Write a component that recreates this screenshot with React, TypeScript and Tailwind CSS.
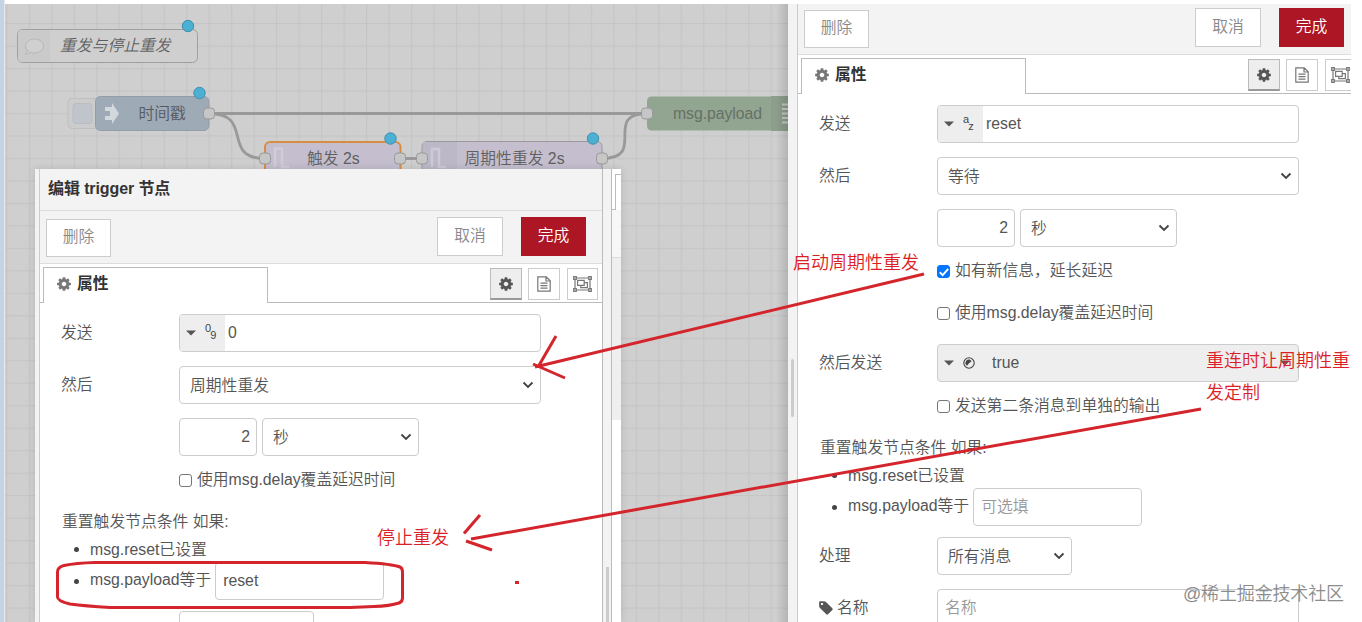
import React from "react";

const FONT = "font-['Liberation_Sans','Noto_Sans_CJK_SC',sans-serif]";

function Gear({ className = "" }: { className?: string }) {
  return (
    <svg viewBox="0 0 1792 1792" className={className} fill="currentColor">
      <path d="M1152 896q0-106-75-181t-181-75-181 75-75 181 75 181 181 75 181-75 75-181zm512-109v222q0 12-8 23t-20 13l-185 28q-19 54-39 91 35 50 107 138 10 12 10 25t-9 23q-27 37-99 108t-94 71q-12 0-26-9l-138-108q-44 23-91 38-16 136-29 186-7 28-36 28h-222q-14 0-24.5-8.5t-11.5-21.5l-28-184q-49-16-90-37l-141 107q-10 9-25 9-14 0-25-11-126-114-165-168-7-10-7-23 0-12 8-23 15-21 51-66.5t54-70.5q-27-50-41-99l-183-27q-13-2-21-12.5t-8-23.5v-222q0-12 8-23t19-13l186-28q14-46 39-92-40-57-107-138-10-12-10-24 0-10 9-23 26-36 98.5-107.5t94.5-71.5q13 0 26 10l138 107q44-23 91-38 16-136 29-186 7-28 36-28h222q14 0 24.5 8.5t11.5 21.5l28 184q49 16 90 37l142-107q9-9 24-9 13 0 25 10 129 119 165 170 7 8 7 22 0 12-8 23-15 21-51 66.5t-54 70.5q26 50 41 98l183 28q13 2 21 12.5t8 23.5z" />
    </svg>
  );
}

function Tag() {
  return (
    <svg viewBox="0 0 1792 1792" className="-ml-px h-4 w-4" fill="currentColor">
      <path d="M576 448q0-53-37.5-90.5t-90.5-37.5-90.5 37.5-37.5 90.5 37.5 90.5 90.5 37.5 90.5-37.5 37.5-90.5zm1067 576q0 53-37 90l-491 492q-39 37-91 37-53 0-90-37l-715-716q-38-37-64.5-101t-26.5-117v-416q0-52 38-90t90-38h416q53 0 117 26.5t102 64.5l715 714q37 39 37 91z" />
    </svg>
  );
}

function DocIcon() {
  return (
    <svg viewBox="0 0 14 16" className="h-4 w-3.5" fill="none" stroke="#777" strokeWidth="1.2">
      <path d="M.8.8h8.4l4 4v10.4H.8zM9 .8V5h4.2M3.5 7.2h7M3.5 9.7h7M3.5 12.2h7" />
    </svg>
  );
}

function GroupIcon() {
  return (
    <svg viewBox="0 0 19 16" className="h-4 w-[19px] shrink-0" fill="none" stroke="#777" strokeWidth="1.2">
      <path d="M3 2h13M3 14h13M2 3v10M17 3v10" />
      <path d="M.7.7h2.6v2.6H.7zM15.7.7h2.6v2.6h-2.6zM.7 12.7h2.6v2.6H.7zM15.7 12.7h2.6v2.6h-2.6z" fill="#ddd" />
      <path d="M4.6 4.4h6.6v5H4.6zM11.2 6.6h3.2v5H7.8V9.4" />
    </svg>
  );
}

function Chevron() {
  return (
    <svg viewBox="0 0 12 8" className="h-2 w-3" fill="none" stroke="#444" strokeWidth="1.9">
      <path d="M1.500 1.500L6 5.900l4.500-4.400" />
    </svg>
  );
}

function Caret() {
  return (
    <svg viewBox="0 0 10 6" className="h-[6px] w-[10px]" fill="#555">
      <path d="M0 .4h10L5 5.6z" />
    </svg>
  );
}

function Select({ text, className }: { text: string; className: string }) {
  return (
    <div className={`flex h-[38px] items-center justify-between rounded border border-[#ccc] bg-white pl-[10px] pr-[6px] ${className}`}>
      <span className="pt-[2px]">{text}</span>
      <Chevron />
    </div>
  );
}

function TypedInput({ top, bottom, text }: { top: string; bottom: string; text: string }) {
  return (
    <div className="flex h-[38px] w-[362px] overflow-hidden rounded border border-[#ccc] bg-white">
      <div className="flex w-[45px] items-center bg-[#eee] pl-[6px]">
        <Caret />
        <div className="ml-[9px] flex h-[22px] text-[11px] leading-[11px] text-[#444]">
          <span className="pt-px">{top}</span>
          <span className="-ml-px pt-[8px]">{bottom}</span>
        </div>
      </div>
      <span className="pl-[3px] leading-[35px]">{text}</span>
    </div>
  );
}

function Check({ label, on = false, className }: { label: string; on?: boolean; className: string }) {
  return (
    <div className={`ml-[117px] flex items-center ${className}`}>
      <span className={`mt-px flex h-[13px] w-[13px] items-center justify-center rounded-[3px] border ${on ? "border-[#0075ff] bg-[#0075ff]" : "border-[#767676] bg-white"}`}>
        {on && (
          <svg viewBox="0 0 12 12" className="h-3 w-3 shrink-0" fill="none" stroke="white" strokeWidth="2">
            <path d="M1.8 6.2l2.9 2.9L10.2 2.8" />
          </svg>
        )}
      </span>
      <span className="ml-[5px] -mt-px">{label}</span>
    </div>
  );
}

function Label({ children }: { children: React.ReactNode }) {
  return <div className="-ml-px mr-px flex h-[38px] w-[117px] shrink-0 items-center">{children}</div>;
}

function Bullet({ children, className }: { children: React.ReactNode; className: string }) {
  return (
    <div className={`flex pl-3 ${className}`}>
      <span className="mr-[11px] flex h-[36px] items-center self-center">
        <span className="h-[5px] w-[5px] rounded-full bg-[#444]" />
      </span>
      {children}
    </div>
  );
}

function Toolbar() {
  return (
    <div className="flex h-[51px] shrink-0 items-start border-b border-[#ddd] bg-[#f3f3f3] pl-[6px] pt-1 leading-[34px] text-[#888]">
      <div className="mt-[2px] h-[38px] w-[65px] border border-[#ccc] bg-white text-center">删除</div>
      <div className="ml-[326px] h-[39px] w-[66px] border border-[#ccc] bg-white text-center leading-[36px]">取消</div>
      <div className="ml-[18px] h-[39px] w-[65px] bg-[#ad1625] text-center leading-[37px] text-white">完成</div>
    </div>
  );
}

function TabBar() {
  return (
    <div className="flex h-[39px] shrink-0 pt-[3px]">
      <div className="w-[3px] shrink-0 border-b border-[#bbb]" />
      <div className="flex w-[225px] shrink-0 items-center border-x border-t border-[#bbb] pb-[4px] pl-[12px] font-bold text-[#333]">
        <Gear className="mr-[5px] h-4 w-4 text-[#777]" />
        属性
      </div>
      <div className="flex flex-1 border-b border-[#bbb] pl-[222px] pt-px">
        <div className="flex h-8 w-8 shrink-0 items-center justify-center border border-b-2 border-[#bbb] border-b-[#999] bg-[#eee] text-[#555]">
          <Gear className="h-4 w-4" />
        </div>
        <div className="ml-[6px] flex h-8 w-8 shrink-0 items-center justify-center border border-[#ccc]">
          <DocIcon />
        </div>
        <div className="ml-[7px] flex h-8 w-[31px] shrink-0 items-center justify-center border border-[#ccc]">
          <GroupIcon />
        </div>
      </div>
    </div>
  );
}

function Delay() {
  return (
    <div className="ml-[117px] flex h-[38px]">
      <div className="h-[38px] w-[78px] rounded border border-[#ccc] bg-white pr-[6px] text-right leading-[36px]">2</div>
      <Select text="秒" className="ml-[5px] w-[157px]" />
    </div>
  );
}

function ResetRules({ value, muted = false }: { value: string; muted?: boolean }) {
  return (
    <>
      <div className="flex h-[34px] items-center pt-[2px]">重置触发节点条件 如果:</div>
      <Bullet className="h-[22px] items-center"><span className="pt-[2px]">msg.reset已设置</span></Bullet>
      <Bullet className="mt-[2px] h-[38px]">
        <span className="leading-[36px]">msg.payload等于</span>
        <span className={`ml-1 h-[38px] w-[169px] rounded border border-[#ccc] bg-white pl-[7px] leading-[35px] ${muted ? "text-[#999]" : ""}`}>{value}</span>
      </Bullet>
    </>
  );
}

function ReferenceForm() {
  return (
    <div className="flex flex-col pl-[22px] pt-[11px]">
      <div className="flex h-[52px]"><Label>发送</Label><TypedInput top="a" bottom="z" text="reset" /></div>
      <div className="flex h-[52px]"><Label>然后</Label><Select text="等待" className="w-[362px]" /></div>
      <Delay />
      <Check on label="如有新信息，延长延迟" className="h-[48px]" />
      <Check label="使用msg.delay覆盖延迟时间" className="h-[36px]" />
      <div className="mt-[13px] flex h-[38px]">
        <Label>然后发送</Label>
        <div className="flex h-[38px] w-[362px] items-center rounded border border-[#ccc] bg-[#eee] pl-[6px]">
          <Caret />
          <svg viewBox="0 0 12 12" className="ml-[9px] h-3 w-3" fill="none" stroke="#444" strokeWidth="1.1">
            <circle cx="6" cy="6" r="5.2" />
            <path d="M6.800 2.600A3.400 3.400 0 0 0 4 8.700L6 6.300 8.600 4.200z" fill="#444" stroke="none" />
          </svg>
          <span className="ml-[17px]">true</span>
          <span className="ml-auto mr-2"><Caret /></span>
        </div>
      </div>
      <Check label="发送第二条消息到单独的输出" className="h-[48px]" />
      <ResetRules value="可选填" muted />
      <div className="mt-[11px] flex h-[52px]"><Label>处理</Label><Select text="所有消息" className="w-[135px]" /></div>
      <div className="flex">
        <Label><Tag /><span className="ml-[3px]">名称</span></Label>
        <div className="h-[38px] w-[362px] rounded border border-[#ccc] pl-[7px] leading-[35px] text-[#999]">名称</div>
      </div>
    </div>
  );
}

function TriggerForm() {
  return (
    <div className="flex flex-col pl-[22px] pt-[11px]">
      <div className="flex h-[52px]"><Label>发送</Label><TypedInput top="0" bottom="9" text="0" /></div>
      <div className="flex h-[52px]"><Label>然后</Label><Select text="周期性重发" className="w-[362px]" /></div>
      <Delay />
      <Check label="使用msg.delay覆盖延迟时间" className="h-[48px]" />
      <ResetRules value="reset" />
      <div className="ml-[117px] mt-[11px] h-[38px] w-[135px] rounded border border-[#ccc]" />
    </div>
  );
}

function Port({ x, y }: { x: number; y: number }) {
  return <rect x={x - 5.5} y={y - 5.5} width="11" height="11" rx="3.5" fill="#c6c6c6" stroke="#999" />;
}

function Dot({ x, y }: { x: number; y: number }) {
  return <circle cx={x} cy={y} r="5.7" fill="#4cb0d2" stroke="#3d8fae" />;
}

function FlowCanvas() {
  return (
    <svg viewBox="5 4 783 618" className="block h-[618px] w-[783px]" fontSize="15.8">
      <defs>
        <pattern id="grid" x="28.8" y="23" width="22.48" height="22.48" patternUnits="userSpaceOnUse">
          <path d="M.6 0V22.48M0 .6H22.48" stroke="#c5c5c5" strokeWidth="1.2" />
        </pattern>
        <linearGradient id="edge"><stop offset="0" stopOpacity="0" /><stop offset="1" stopOpacity=".13" /></linearGradient>
      </defs>
      <rect x="5" y="4" width="783" height="618" fill="#cfcfcf" />
      <rect x="5" y="4" width="783" height="618" fill="url(#grid)" />
      <rect x="17.5" y="29.5" width="180" height="33" rx="5" fill="#cfcfcf" stroke="#a0a0a0" />
      <path d="M18 34q0-4 4-4h28v32H22q-4 0-4-4z" fill="#cacaca" />
      <path d="M28 51.500q-2.500-2.500-2.500-5.500c0-4 4-7 9-7s9 3 9 7-4 7-9 7q-2.500 0-4-.7-2.500 2-5.500 1.700 2-1.500 3-3.500z" fill="#d0d0d0" stroke="#b7b7b7" />
      <text x="60" y="51" fontStyle="italic" fill="#606060">重发与停止重发</text>
      <g fill="none" stroke="#999" strokeWidth="2.8">
        <path d="M209 113.500H647M209 113.500C255 113.500 220 158.500 265 158.500M400 158.500H422M602 158.500C648 158.500 602 113.500 647 113.500" />
      </g>
      <rect x="68" y="98.500" width="32" height="30" rx="4" fill="#ccc" stroke="#bfbfbf" />
      <rect x="73" y="103.500" width="19" height="20" rx="3" fill="#bfc5cb" stroke="#b7bdc3" />
      <rect x="95.500" y="96.500" width="113.500" height="34" rx="5" fill="#9eaab6" stroke="#939da7" />
      <path d="M105 107h7v-4l7 10.500-7 10.500v-4h-7v-4h5v-5h-5z" fill="#d3d8dd" />
      <path d="M103 113.500h7" stroke="#9eaab6" strokeWidth="2" />
      <text x="138.500" y="119" fill="#555a60">时间戳</text>
      <rect x="265" y="142" width="135.500" height="34" rx="5" fill="#c4bece" stroke="#d98d43" strokeWidth="2" />
      <path d="M275 167v-18.500h7v18.500h7" fill="none" stroke="#d0ccd6" strokeWidth="2.5" />
      <text x="307" y="163.500" fill="#606060">触发 2s</text>
      <rect x="422" y="141.500" width="180" height="34" rx="5" fill="#c4bece" stroke="#999" />
      <path d="M423 142h34v30h-34z" fill="#bdb8c8" />
      <path d="M432 167v-18h7v18h7" fill="none" stroke="#cec9d5" strokeWidth="2.5" />
      <text x="464.500" y="163.500" fill="#606060">周期性重发 2s</text>
      <path d="M788 96.500H652q-5 0-5 5v24q0 5 5 5h136z" fill="#92a591" />
      <path d="M771 96h17v35h-17z" fill="#8d9f8c" />
      <path d="M782 104.500h6M782 109h6M782 113.500h6M782 118h6M782 122.500h6" stroke="#c6c9c6" strokeWidth="2" />
      <text x="673" y="119" fill="#667066" textLength="89">msg.payload</text>
      <Port x={209} y={113.5} /><Port x={265} y={158.5} /><Port x={400} y={158.5} />
      <Port x={422} y={158.5} /><Port x={602} y={158.5} /><Port x={647} y={113.5} />
      <Dot x={188} y={26} /><Dot x={199.5} y={93} /><Dot x={390.5} y={138.5} /><Dot x={593} y={138.5} />
      <rect x="776" y="4" width="12" height="618" fill="url(#edge)" />
    </svg>
  );
}

function TriggerDialog() {
  return (
    <div className="absolute left-[35px] top-[169px] flex h-[453px] w-[586px] overflow-hidden bg-white shadow-[0_0_8px_rgba(0,0,0,0.12)]">
      <div className="w-[5px] shrink-0 border-r border-[#ccc] bg-[#f3f3f3]" />
      <div className="flex w-[562px] shrink-0 flex-col">
        <div className="h-[42px] shrink-0 border-b border-[#ddd] bg-[#f3f3f3] pl-[8px] text-base font-bold leading-[39px] tracking-[-0.1px] text-[#333]">编辑 trigger 节点</div>
        <div className="flex flex-col bg-[#f3f3f3] pt-[2px]"><Toolbar /></div>
        <div className="flex flex-col bg-white"><TabBar /></div>
        <TriggerForm />
      </div>
      <div className="flex w-[10px] shrink-0 flex-col items-center border-x border-[#bbb] bg-[#f3f3f3] pt-[398px]">
        <div className="w-[3px] flex-1 bg-[#ccc]" />
      </div>
      <div className="flex flex-1 flex-col">
        <div className="flex h-[41px] pt-[5px]">
          <div className="w-[3px] border-b border-[#bbb]" />
          <div className="flex-1 border-l border-t border-[#bbb]" />
        </div>
        <div className="h-[48px] border-b border-[#ddd] bg-[#f7f7f7]" />
        <div className="h-[162px] bg-[#efefef]" />
      </div>
    </div>
  );
}

function Annotations() {
  return (
    <svg viewBox="0 0 1362 622" className="pointer-events-none absolute left-0 top-0 h-[622px] w-[1362px]">
      <g fill="none" stroke="#d4252c" strokeWidth="3">
        <path d="M924 274L535 367M556 336L538 367M533 364L565 378" />
        <path d="M1201 409L471 539M480 515L464 533.500M466 541L492 550" />
        <path d="M95 562.500H365Q392 564 400 567Q402.500 568 402.500 572V598Q402.500 602 399 603Q390 606 374 606.500L350 607.500H110Q85 606 70 604Q57.500 601 57.500 597V572Q57.500 567 64 565.500Q76 563 95 562.500Z" />
        <path d="M515 582.500h4" />
      </g>
      <g fill="#dc1f26" fontSize="18">
        <text x="793" y="269">启动周期性重发</text>
        <text x="377" y="544">停止重发</text>
        <text x="1206" y="367">重连时让周期性重</text>
        <text x="1206" y="399">发定制</text>
      </g>
      <text x="1183" y="599.500" fontSize="18" fill="#8c8c8c" textLength="161">@稀土掘金技术社区</text>
    </svg>
  );
}

export default function App() {
  return (
    <div className={`relative flex h-[622px] w-[1362px] overflow-hidden bg-white text-[15.8px] font-[350] leading-5 text-[#555] ${FONT}`}>
      <div className="w-1 shrink-0 bg-[#c5d3e6]" />
      <div className="w-px shrink-0 bg-[#e8e8e8]" />
      <div className="w-[783px] shrink-0 pt-1"><FlowCanvas /></div>
      <div className="mt-1 flex w-[10px] shrink-0 items-start justify-center border-r border-[#ccc] bg-[#f3f3f3] pt-[355px]">
        <div className="h-[58px] w-[3px] rounded bg-[#ccc]" />
      </div>
      <div className="mt-1 flex w-[553px] shrink-0 flex-col overflow-hidden">
        <Toolbar />
        <TabBar />
        <ReferenceForm />
      </div>
      <TriggerDialog />
      <Annotations />
    </div>
  );
}
